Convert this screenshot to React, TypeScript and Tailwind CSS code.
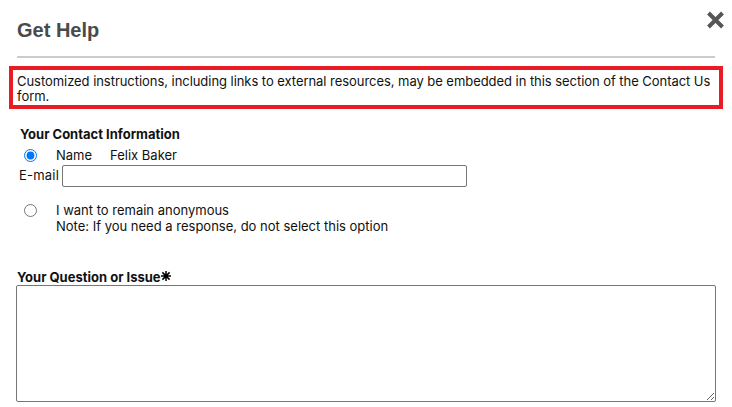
import { useState } from "react";

export default function App() {
  const [mode, setMode] = useState<"name" | "anon">("name");

  return (
    <div className="w-[732px] h-[407px] overflow-hidden bg-white text-[13px] text-[#111] font-['Inter',sans-serif]">
      <div className="flex items-start justify-between pl-[17px] pr-[7px] pt-[18px]">
        <h2 className="text-[20px] leading-[24px] font-bold text-[#4a4a4a] font-['Liberation_Sans',Arial,sans-serif]">
          Get Help
        </h2>
        <button className="mt-[-7px] text-[#555]" aria-label="Close">
          <svg width="19" height="18" viewBox="0 0 19 18">
            <path
              d="M2.5 2 L16.5 16 M16.5 2 L2.5 16"
              stroke="currentColor"
              strokeWidth="4"
            />
          </svg>
        </button>
      </div>

      <div className="mx-[17px] mt-[14px] h-[2px] bg-[#cccccc]" />

      <div className="mx-[9px] mt-[8px] border-4 border-[#e81c24] pl-[4px] pr-[1px] pt-[4px] pb-[1px] leading-[15px] tracking-[-0.05px]">
        Customized instructions, including links to external resources, may be
        embedded in this section of the Contact Us form.
      </div>

      <div className="pl-[20px] pt-[17px]">
        <p className="font-bold leading-[16px]">Your Contact Information</p>
        <label className="flex items-center mt-[5px] leading-[16px]">
          <input
            type="radio"
            name="who"
            checked={mode === "name"}
            onChange={() => setMode("name")}
            className="w-[13px] h-[13px] ml-[4px] accent-[#0075ff]"
          />
          <span className="ml-[19px]">Name</span>
          <span className="ml-[18px]">Felix Baker</span>
        </label>
        <div className="flex items-center mt-[2px] ml-[-1px]">
          <span className="tracking-[0.2px]">E-mail</span>
          <input
            type="text"
            className="ml-[3px] w-[405px] h-[22px] border border-[#767676] rounded-[2px] px-1 outline-none"
          />
        </div>
        <label className="flex items-start mt-[15px] leading-[16px]">
          <input
            type="radio"
            name="who"
            checked={mode === "anon"}
            onChange={() => setMode("anon")}
            className="w-[13px] h-[13px] ml-[4px] mt-[2px] accent-[#0075ff]"
          />
          <span className="ml-[19px]">
            I want to remain anonymous
            <br />
            Note: If you need a response, do not select this option
          </span>
        </label>
      </div>

      <div className="pl-[17px] pr-[16px] pt-[35px]">
        <p className="flex items-start font-bold leading-[16px]">
          Your Question or Issue
          <svg width="10" height="10" viewBox="0 0 10 10" className="mt-[2px]" aria-label="required">
            <path
              d="M5 0 V10 M0 5 H10 M1.4 1.4 L8.6 8.6 M8.6 1.4 L1.4 8.6"
              stroke="#000"
              strokeWidth="1.5"
            />
          </svg>
        </p>
        <textarea className="block w-[700px] h-[117px] ml-[-1px] border border-[#767676] rounded-[2px] outline-none resize-y" />
      </div>
    </div>
  );
}
